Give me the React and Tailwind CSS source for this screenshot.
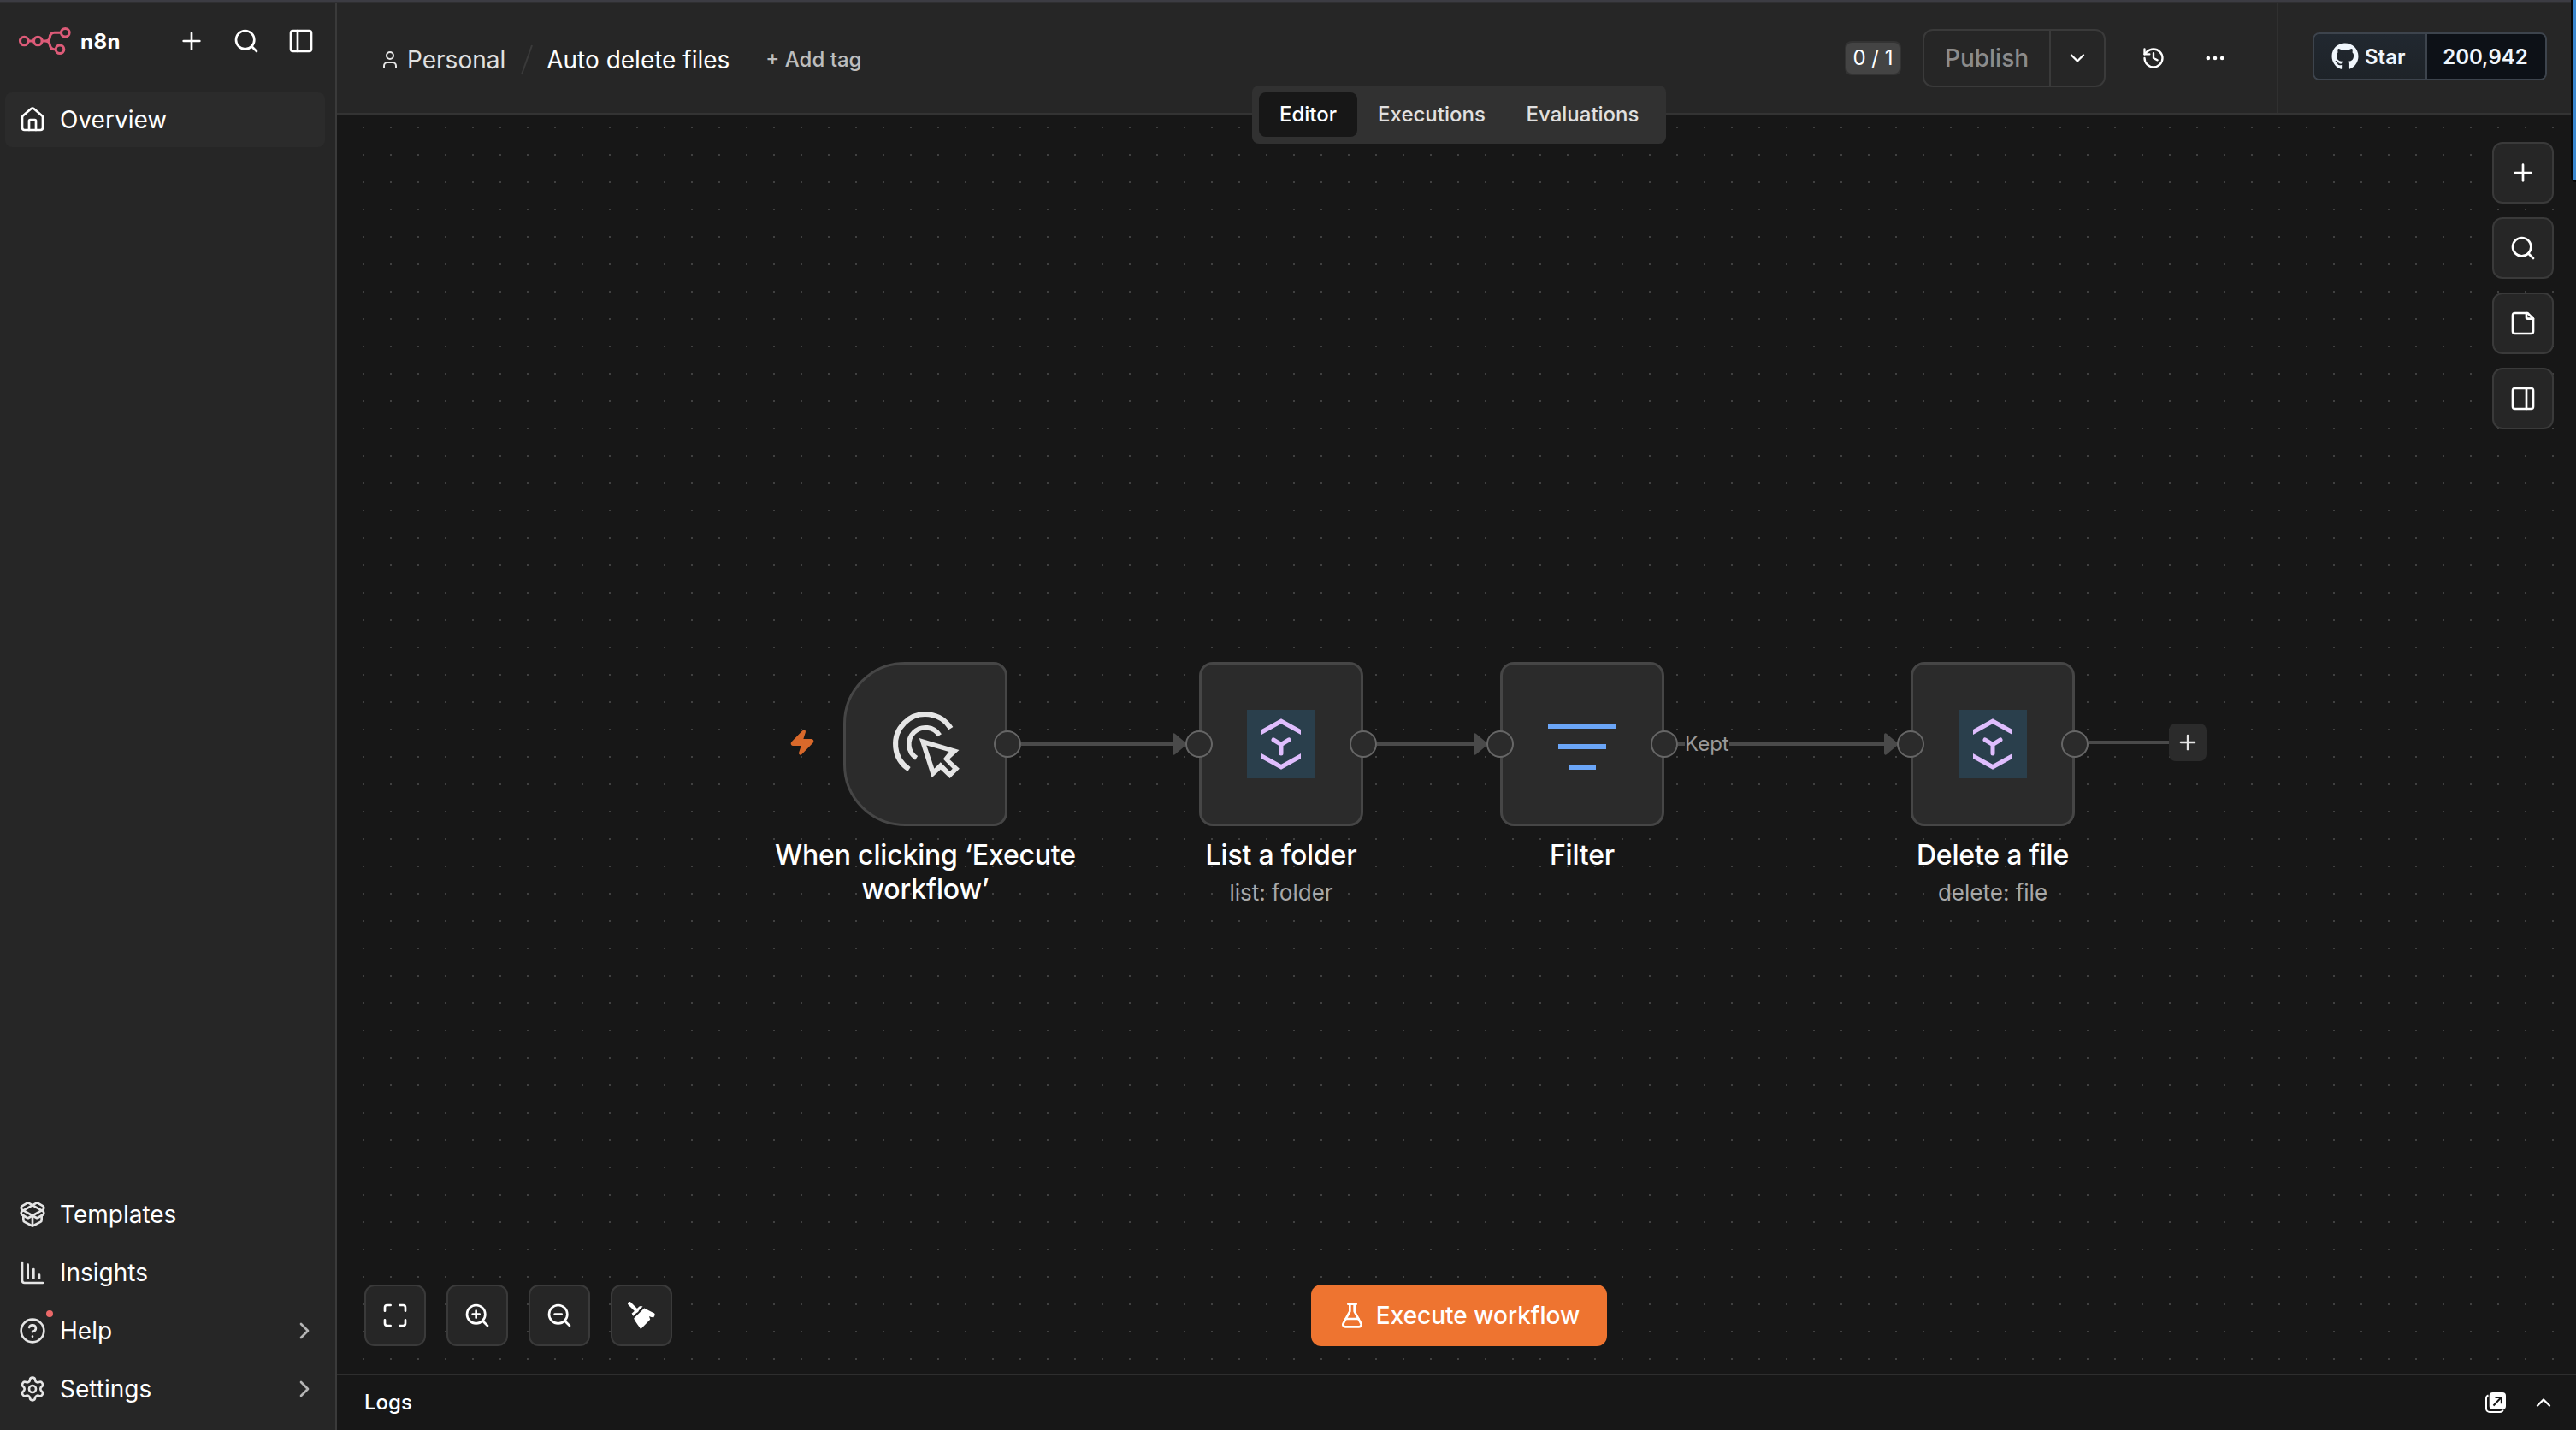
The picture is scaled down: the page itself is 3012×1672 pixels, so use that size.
import {
  ChartColumnDecreasing,
  ChevronDown,
  ChevronRight,
  ChevronUp,
  CircleQuestionMark,
  Ellipsis,
  FlaskConical,
  History,
  House,
  Maximize,
  PackageOpen,
  PanelLeft,
  PanelRight,
  Plus,
  Search,
  Settings,
  User,
  Zap,
  ZoomIn,
  ZoomOut,
} from "lucide-react";
import { FaGithub } from "react-icons/fa";

const footerLinks = [
  { label: "Templates", Icon: PackageOpen },
  { label: "Insights", Icon: ChartColumnDecreasing },
  { label: "Help", Icon: CircleQuestionMark, badge: true, expandable: true },
  { label: "Settings", Icon: Settings, expandable: true },
];

const Logo = () => (
  <svg width="62" height="34" viewBox="21 31 62 34" fill="none" stroke="#dd5b78" strokeWidth="3.1">
    <circle cx="28.3" cy="48" r="4.8" />
    <circle cx="44.3" cy="48" r="4.8" />
    <circle cx="76.3" cy="38.3" r="4.8" />
    <circle cx="70" cy="57.7" r="4.8" />
    <path d="M33 48h6.5M49 48h4.5c3 0 4.300-1.500 4.700-4.300C58.700 40 60.500 38.300 63.500 38.300H71.500" />
    <path d="M53.500 48c3 0 4.200 1.500 4.700 4.300c.6 3.600 2 5.400 5 5.400h2" />
  </svg>
);

const StickyNoteIcon = () => (
  <svg width="32" height="32" viewBox="0 0 24 24" fill="none" stroke="currentColor" strokeWidth="2" strokeLinecap="round" strokeLinejoin="round">
    <path d="M16 3H5a2 2 0 0 0-2 2v14a2 2 0 0 0 2 2h14a2 2 0 0 0 2-2V8Z" />
    <path d="M15 3v4a1 1 0 0 0 1 1h5" />
  </svg>
);

const BroomIcon = () => (
  <svg width="32" height="32" viewBox="0 0 32 32" fill="currentColor">
    <path d="M2.200 2.200L10.500 10.500" stroke="currentColor" strokeWidth="4.200" strokeLinecap="round" />
    <path d="M5.200 13.300L13.200 5.700Q15 4.300 17.500 5.600L6.500 16.800Q4.300 15.500 5.200 13.300Z" />
    <path d="M19.300 7.600L30.800 13.300Q32.200 14.300 31.500 16L30.300 18.200Q28 18.300 25 17L26.200 20.700L15.200 32Q12 27.500 8.600 22.500Q7.400 20.500 7.200 19.200Z" />
  </svg>
);

const PopOutIcon = () => (
  <svg width="24" height="24" viewBox="0 0 24 24" fill="none">
    <path d="M3.500 3.500C2 4 1 5 1 7v12a4 4 0 0 0 4 4h12c2 0 3.200-1 3.700-2.500" stroke="#fff" strokeWidth="2" />
    <rect x="4.700" y="0" width="19.300" height="20" rx="4" fill="#fff" />
    <path d="M9.500 15.500L18 6.500M11.500 6h7.300v7.300" stroke="#171717" strokeWidth="2" />
  </svg>
);

const ClickIcon = () => (
  <svg width="80" height="80" viewBox="0 0 80 80" fill="none">
    <path d="M69.800 21.700A35 35 0 1 0 21 69.500" stroke="#e5e5e5" strokeWidth="6" />
    <path d="M56.600 29.800A19.400 19.400 0 1 0 29.600 56.400" stroke="#e5e5e5" strokeWidth="5.600" />
    <path
      fill="#e5e5e5"
      fillRule="evenodd"
      d="M32.800 33L79.500 47 68 57.700 79.900 68.700 68.600 80 57.800 69.700 47.600 79.300ZM41.300 41.500L50.400 68.700 57.800 61.300 68.600 72 71.800 68.700 60.800 57.500 67.500 49Z"
    />
  </svg>
);

const StorageIcon = () => (
  <svg width="80" height="80" viewBox="0 0 80 80">
    <rect width="80" height="80" fill="#2a3f4c" />
    <path d="M40 10.300L63 23v6L40 16.300 17 29v-6ZM40 69.700L63 57v-6L40 63.700 17 51v6Z" fill="#dfbdfd" />
    <path d="M31 35l9 5.500 9-5.500M40 40.500v10.400" fill="none" stroke="#dfbdfd" strokeWidth="5" strokeLinecap="round" />
  </svg>
);

const FilterIcon = () => (
  <div className="flex h-20 w-20 flex-col items-center justify-center gap-[18px] pt-1.5">
    <div className="h-1.5 w-20 bg-[#6ba6f8]" />
    <div className="h-1.5 w-14 bg-[#6ba6f8]" />
    <div className="h-1.5 w-8 bg-[#6ba6f8]" />
  </div>
);

const nodes = [
  { name: "When clicking ‘Execute workflow’", Icon: ClickIcon, place: "left-[592px]", trigger: true },
  { name: "List a folder", note: "list: folder", Icon: StorageIcon, place: "left-[1008px]" },
  { name: "Filter", Icon: FilterIcon, place: "left-[1360px]" },
  { name: "Delete a file", note: "delete: file", Icon: StorageIcon, place: "left-[1840px]" },
];

const Handle = ({ side }) => (
  <div
    className={`absolute top-20 h-8 w-8 rounded-full border-2 border-[#666666] bg-[#2b2b2b] ${
      side === "left" ? "-left-4" : "-right-4"
    }`}
  />
);

const Node = ({ name, note, Icon, place, trigger }) => (
  <div className={`absolute top-[640px] w-48 ${place}`}>
    <div className="relative h-48">
      <div
        className={`flex h-48 items-center justify-center border-3 border-[#464646] bg-[#2b2b2b] ${
          trigger ? "rounded-l-[72px] rounded-r-2xl" : "rounded-2xl"
        }`}
      >
        <Icon />
      </div>
      {!trigger && <Handle side="left" />}
      <Handle side="right" />
    </div>
    <div className="-mx-24 mt-3.5 px-2 text-center">
      <p className="text-[32px] leading-10 font-medium tracking-[-0.18px] text-white">{name}</p>
      {note && <p className="mt-1.5 text-[26px] leading-9 text-[#a8a8a8]">{note}</p>}
    </div>
  </div>
);

// Arrow head sits flush against the input handle of the next node
const Edge = ({ place, label }) => (
  <div className={`absolute top-[720px] flex h-8 items-center ${place}`}>
    {label && (
      <>
        <div className="h-1 w-2 bg-[#4a4a4a]" />
        <span className="text-2xl leading-8 text-[#999999]">{label}</span>
      </>
    )}
    <div className="h-1 flex-1 bg-[#4a4a4a]" />
    <svg width="16" height="26" viewBox="0 0 16 26">
      <path d="M0 2.500C0 .5 1.500-.3 3 1L15.500 11.500c1 .9 1 2.100 0 3L3 25c-1.500 1.300-3 .5-3-1.500Z" fill="#4a4a4a" />
    </svg>
  </div>
);

const CanvasButton = ({ children }) => (
  <button className="flex h-18 w-18 items-center justify-center rounded-xl border-2 border-[#3a3a3a] bg-[#262626] text-white">
    {children}
  </button>
);

const Sidebar = () => (
  <aside className="flex w-[394px] flex-col border-r-2 border-[#3a3a3a] bg-[#262626] text-white">
    <div className="flex h-22 items-center pr-6 pl-[21px]">
      <Logo />
      <span className="mt-0.5 ml-[11px] text-[24px] font-bold tracking-[0.5px]">n8n</span>
      <div className="ml-auto flex gap-8">
        <Plus size={32} />
        <Search size={32} />
        <PanelLeft size={32} />
      </div>
    </div>
    <div className="mt-4 px-1.5 pr-3">
      <a className="flex h-16 items-center gap-4 rounded-lg bg-[#2b2b2b] pl-4 text-[28px]">
        <House size={32} />
        Overview
      </a>
    </div>
    <nav className="mt-auto flex flex-col gap-1 px-1.5 pr-3 pb-4">
      {footerLinks.map(({ label, Icon, badge, expandable }) => (
        <a key={label} className="flex h-16 items-center gap-4 pr-2 pl-4 text-[28px]">
          <span className="relative text-[#e5e5e5]">
            <Icon size={32} />
            {badge && <span className="absolute -top-2 -right-2 h-2 w-2 rounded-full bg-[#ea6868]" />}
          </span>
          {label}
          {expandable && <ChevronRight size={32} className="ml-auto text-[#b5b5b5]" />}
        </a>
      ))}
    </nav>
  </aside>
);

const Header = () => (
  <header className="flex h-[130px] border-b-2 border-[#333333] bg-[#262626]">
    <div className="flex flex-1 items-center pr-[58px] pl-[50px]">
      <div className="flex items-center pt-1">
        <User size={24} className="text-[#e5e5e5]" />
        <span className="ml-2 text-[28px] text-[#e0e0e0]">Personal</span>
        <svg width="16" height="36" viewBox="0 0 16 36" className="ml-[17px]">
          <path d="M2 35L14 1" stroke="#3a3a3a" strokeWidth="2" />
        </svg>
        <span className="ml-[15px] text-[28px] text-white">Auto delete files</span>
        <button className="ml-[42px] text-2xl font-medium text-[#bdbdbd]">+ Add tag</button>
      </div>
      <div className="ml-auto flex items-center">
        <span className="flex h-10 w-[66px] items-center justify-center rounded-lg border-2 border-[#333333] bg-[#444444] text-2xl text-white">
          0 / 1
        </span>
        <div className="ml-[25px] flex h-17 w-[214px] rounded-xl border-2 border-[#3a3a3a]">
          <button className="flex-1 text-[28px] font-medium text-[#8c8c8c]">Publish</button>
          <button className="flex w-16 items-center justify-center border-l-2 border-[#3a3a3a] text-white">
            <ChevronDown size={28} />
          </button>
        </div>
        <History size={28} className="ml-[42px] text-white" />
        <Ellipsis size={28} className="ml-[44px] text-white" />
      </div>
    </div>
    <div className="flex w-[350px] border-l-2 border-[#303030] pt-[34px] pl-10">
      <div className="flex h-14 w-[274px] rounded-lg border-2 border-[#3d444d] text-2xl font-semibold">
        <div className="flex w-[130px] items-center gap-[7px] rounded-l-md bg-gradient-to-b from-[#212830] to-[#1e2328] pl-5 text-[#f0f6fc]">
          <FaGithub size={32} />
          <span className="pt-0.5">Star</span>
        </div>
        <div className="flex flex-1 items-center justify-center rounded-r-md border-l-2 border-[#3d444d] bg-[#0d1117] pt-0.5 pr-0.5 text-[#f0f6fc]">
          200,942
        </div>
      </div>
    </div>
  </header>
);

const Tabs = () => (
  <div className="absolute top-24 left-[1070px] flex h-17 w-[484px] rounded-lg bg-[#313131] p-2 text-2xl font-medium text-[#e0e0e0]">
    <button className="w-[115px] rounded-lg bg-[#171717] text-white">Editor</button>
    <button className="w-[174px]">Executions</button>
    <button className="flex-1">Evaluations</button>
  </div>
);

const Canvas = () => (
  <main className="relative flex-1 bg-[#171717]">
    <svg className="absolute inset-0 h-full w-full">
      <defs>
        <pattern id="grid" x="30" y="14" width="32" height="32" patternUnits="userSpaceOnUse">
          <rect width="2" height="2" fill="#404040" />
        </pattern>
      </defs>
      <rect width="100%" height="100%" fill="url(#grid)" />
    </svg>

    <Zap size={32} fill="currentColor" className="absolute top-[718px] left-[528px] text-[#d9692b]" />
    <Edge place="left-[800px] w-[193px]" />
    <Edge place="left-[1216px] w-[129px]" />
    <Edge place="left-[1568px] w-[257px]" label="Kept" />
    <div className="absolute top-[712px] left-[2048px] flex items-center">
      <div className="h-1 w-[94px] bg-[#4a4a4a]" />
      <button className="flex h-11 w-11 items-center justify-center rounded-lg bg-[#2b2b2b] text-[#e5e5e5]">
        <Plus size={28} />
      </button>
    </div>
    {nodes.map((node) => (
      <Node key={node.name} {...node} />
    ))}

    <div className="absolute top-8 right-[26px] flex flex-col gap-4">
      <CanvasButton><Plus size={32} /></CanvasButton>
      <CanvasButton><Search size={32} /></CanvasButton>
      <CanvasButton><StickyNoteIcon /></CanvasButton>
      <CanvasButton><PanelRight size={32} /></CanvasButton>
    </div>
    <div className="absolute bottom-8 left-8 flex gap-6">
      <CanvasButton><Maximize size={32} /></CanvasButton>
      <CanvasButton><ZoomIn size={32} /></CanvasButton>
      <CanvasButton><ZoomOut size={32} /></CanvasButton>
      <CanvasButton><BroomIcon /></CanvasButton>
    </div>
    <button className="absolute bottom-8 left-[1139px] flex h-18 w-[346px] items-center justify-center gap-3 rounded-xl bg-[#ee7430] text-[28px] font-medium text-white">
      <FlaskConical size={32} />
      Execute workflow
    </button>
  </main>
);

const App = () => {
  return (
    <div className="relative flex h-[1672px] w-[3012px] flex-col overflow-hidden bg-[#171717] font-['Inter',sans-serif] antialiased">
      <div className="h-1 border-t-2 border-[#3c3c43] bg-[#2f2f31]" />
      <div className="flex min-h-0 flex-1">
        <Sidebar />
        <div className="relative flex flex-1 flex-col">
          <Header />
          <Canvas />
          <Tabs />
          <footer className="flex h-[66px] items-center border-t-2 border-[#2e2e2e] bg-[#171717] pr-6 pl-8 text-2xl font-medium text-white">
            Logs
            <div className="ml-auto flex items-center gap-[30px]">
              <PopOutIcon />
              <ChevronUp size={28} />
            </div>
          </footer>
        </div>
      </div>
      {/* neighbouring window peeking in at the right edge */}
      <div className="absolute -top-5 right-0 h-[231px] w-1 rounded-bl-[4px] bg-[#3a87cf] shadow-[0_0_0_2px_#050505]" />
    </div>
  );
};

export default App;
